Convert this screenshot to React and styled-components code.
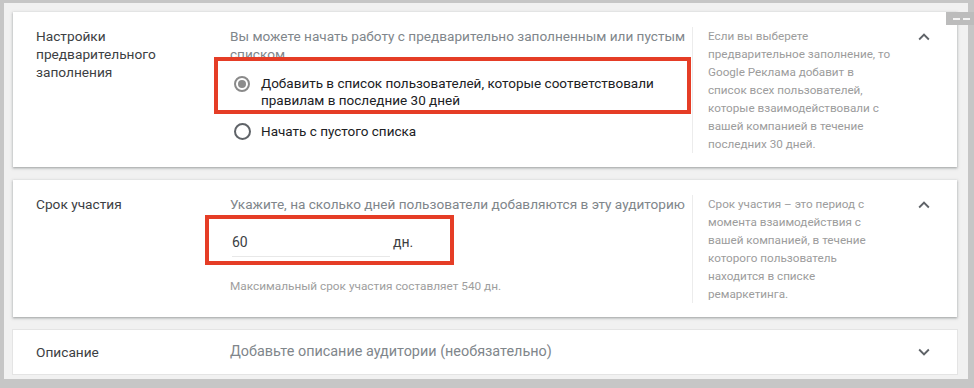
import React from "react";
import styled, { createGlobalStyle } from "styled-components";

const Global = createGlobalStyle`
  html, body { margin: 0; padding: 0; background: #c6c6c6; }
  #root { width: 974px; height: 388px; }
  * { box-sizing: border-box; }
`;

const Frame = styled.div`
  position: relative;
  width: 974px;
  height: 388px;
  background: #c6c6c6;
  padding: 3px 6px 9px 4px;
  font-family: Roboto, "Noto Sans", Arial, sans-serif;
`;

const Tab = styled.div`
  position: absolute;
  right: 0;
  top: 12px;
  width: 28px;
  height: 13px;
  background: #bcbcbc;
  display: flex;
  align-items: center;
  justify-content: center;
  gap: 3px;
  padding-left: 2px;
`;

const Dash = styled.span`
  width: 7px;
  height: 2px;
  background: #f4f4f4;
`;

const Inner = styled.div`
  height: 100%;
  background: #f1f1f1;
  padding: 9px 11px 0 9px;
  display: flex;
  flex-direction: column;
  gap: 13px;
`;

const Card = styled.section`
  background: #fff;
  display: grid;
  grid-template-columns: 194px 462px 208px 1fr;
  align-items: ${(p) => (p.$compact ? "center" : "start")};
  height: ${(p) => (p.$compact ? "44px" : "auto")};
  padding: ${(p) => (p.$compact ? "0 0 0 23px" : "15px 0 14px 23px")};
  box-shadow: ${(p) =>
    p.$compact
      ? "0 0 0 1px #e4e4e4"
      : "0 1px 2px rgba(60,64,67,0.35), 0 1px 3px 1px rgba(60,64,67,0.12)"};
`;

const Label = styled.div`
  font-size: 13.7px;
  line-height: 18px;
  color: #3c4043;
`;

const Middle = styled.div`
  display: flex;
  flex-direction: column;
  align-items: flex-start;
`;

const Desc = styled.div`
  font-size: ${(p) => p.$fs || 13.6}px;
  line-height: 18px;
  color: #80868b;
  white-space: nowrap;
`;

const Annot = styled.div`
  position: relative;
  border: 4px solid #e53d26;
  background: #fff;
  width: ${(p) => p.$w}px;
  height: ${(p) => p.$h}px;
  margin-left: ${(p) => p.$dx}px;
  margin-top: ${(p) => p.$dy}px;
  padding: ${(p) => p.$pad};
`;

const RadioRow = styled.label`
  display: flex;
  align-items: flex-start;
  gap: ${(p) => p.$gap}px;
  padding-left: ${(p) => p.$indent || 0}px;
  margin-top: ${(p) => p.$mt || 0}px;
`;

const Radio = styled.span`
  flex: none;
  width: ${(p) => p.$size}px;
  height: ${(p) => p.$size}px;
  margin-top: ${(p) => p.$mt}px;
  border-radius: 50%;
  border: 2px solid ${(p) => (p.$checked ? "#8a8a8a" : "#5f6368")};
  display: flex;
  align-items: center;
  justify-content: center;
  &::after {
    content: "";
    display: ${(p) => (p.$checked ? "block" : "none")};
    width: 8px;
    height: 8px;
    border-radius: 50%;
    background: #8c8c8c;
  }
`;

const RadioText = styled.span`
  font-size: 13.5px;
  line-height: 17px;
  color: #202124;
  white-space: nowrap;
`;

const InputRow = styled.div`
  display: flex;
  align-items: flex-start;
`;

const Field = styled.div`
  width: 158px;
  font-size: 14px;
  line-height: 18px;
  color: #3c4043;
  padding-bottom: 5px;
  border-bottom: 1px solid #e8e8e8;
`;

const Suffix = styled.span`
  margin-left: 3px;
  font-size: 14px;
  line-height: 18px;
  color: #3c4043;
`;

const Hint = styled.div`
  margin-top: 12px;
  font-size: 11.8px;
  line-height: 18px;
  color: #9e9e9e;
  white-space: nowrap;
`;

const Help = styled.div`
  border-left: 1px solid #ececec;
  padding-left: 15px;
  font-size: 11.7px;
  line-height: 18px;
  color: #9c9c9c;
  white-space: nowrap;
`;

const ChevronCell = styled.div`
  padding-left: 13px;
  margin-top: ${(p) => (p.$compact ? "0" : "-1px")};
  display: flex;
  color: #5f6368;
`;

const Chevron = ({ up }) => (
  <svg width="22" height="22" viewBox="0 0 24 24" fill="currentColor">
    {up ? (
      <path d="M12 8l-6 6 1.41 1.41L12 10.83l4.59 4.58L18 14z" />
    ) : (
      <path d="M16.59 8.59L12 13.17 7.41 8.59 6 10l6 6 6-6z" />
    )}
  </svg>
);

export default function App() {
  return (
    <>
      <Global />
      <Frame>
        <Tab>
          <Dash />
          <Dash />
        </Tab>
        <Inner>
          <Card>
            <Label>
              Настройки
              <br />
              предварительного
              <br />
              заполнения
            </Label>
            <Middle>
              <Desc>
                Вы можете начать работу с предварительно заполненным или пустым
                <br />
                списком
              </Desc>
              <Annot $w={477} $h={57} $dx={-16} $dy={-6} $pad="14px 0 1px 16px">
                <RadioRow $gap={11}>
                  <Radio $checked $size={16} $mt={1} />
                  <RadioText>
                    Добавить в список пользователей, которые соответствовали
                    <br />
                    правилам в последние 30 дней
                  </RadioText>
                </RadioRow>
              </Annot>
              <RadioRow $gap={10} $indent={4} $mt={9}>
                <Radio $size={17} $mt={0} />
                <RadioText>Начать с пустого списка</RadioText>
              </RadioRow>
            </Middle>
            <Help>
              Если вы выберете
              <br />
              предварительное заполнение, то
              <br />
              Google Реклама добавит в
              <br />
              список всех пользователей,
              <br />
              которые взаимодействовали с
              <br />
              вашей компанией в течение
              <br />
              последних 30 дней.
            </Help>
            <ChevronCell>
              <Chevron up />
            </ChevronCell>
          </Card>

          <Card>
            <Label>Срок участия</Label>
            <Middle>
              <Desc>Укажите, на сколько дней пользователи добавляются в эту аудиторию</Desc>
              <Annot $w={249} $h={50} $dx={-25} $dy={2} $pad="14px 0 0 23px">
                <InputRow>
                  <Field>60</Field>
                  <Suffix>дн.</Suffix>
                </InputRow>
              </Annot>
              <Hint>Максимальный срок участия составляет 540 дн.</Hint>
            </Middle>
            <Help>
              Срок участия – это период с
              <br />
              момента взаимодействия с
              <br />
              вашей компанией, в течение
              <br />
              которого пользователь
              <br />
              находится в списке
              <br />
              ремаркетинга.
            </Help>
            <ChevronCell>
              <Chevron up />
            </ChevronCell>
          </Card>

          <Card $compact>
            <Label>Описание</Label>
            <Desc $fs={14.4}>Добавьте описание аудитории (необязательно)</Desc>
            <div />
            <ChevronCell $compact>
              <Chevron />
            </ChevronCell>
          </Card>
        </Inner>
      </Frame>
    </>
  );
}
